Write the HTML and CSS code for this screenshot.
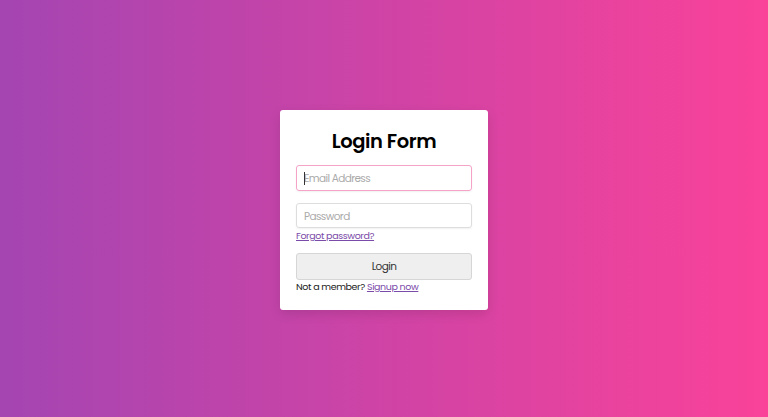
FILE: index.html
```html
<!DOCTYPE html>
<html>
<head>
<meta charset="utf-8">
<link rel="stylesheet" href="styles.css">
</head>
<body>
<div class="page">
  <form class="card">
    <h1 class="title">Login Form</h1>
    <div class="field focus"><span class="caret"></span><input class="input" type="text" placeholder="Email Address"></div>
    <div class="field pw"><input class="input" type="password" placeholder="Password"></div>
    <a class="link forgot" href="#">Forgot password?</a>
    <button class="btn" type="button">Login</button>
    <p class="signup">Not a member? <a class="link" href="#">Signup now</a></p>
  </form>
</div>
</body>
</html>
```
FILE: styles.css
```css
* { box-sizing: border-box; }
html, body { margin: 0; padding: 0; height: 100%; }
body {
  font-family: "Poppins", "Inter", "Noto Sans", sans-serif;
  background: linear-gradient(to right, #a445b2, #fa4299);
}
.page {
  height: 417px;
  padding-top: 110px;
  display: flex;
  align-items: flex-start;
  justify-content: center;
}
.card {
  width: 208px;
  height: 200px;
  background: #fff;
  border-radius: 3px;
  padding: 16px;
  display: flex;
  flex-direction: column;
  box-shadow: 0 4px 12px rgba(0,0,0,0.12);
}
.title {
  margin: 0 0 9px;
  height: 30px;
  line-height: 31px;
  font-size: 19.5px;
  font-weight: 600;
  letter-spacing: -0.4px;
  text-align: center;
  color: #000;
}
.field {
  position: relative;
  height: 26px;
  width: 100%;
  border: 1px solid #ddd;
  border-radius: 3px;
  box-shadow: 0 1px 2px rgba(0,0,0,0.06);
  display: flex;
  align-items: center;
}
.input {
  border: none;
  outline: none;
  background: transparent;
  width: 100%;
  height: 100%;
  padding: 3px 7px 0;
  font-family: inherit;
  font-size: 10.5px;
  letter-spacing: -0.6px;
  color: #333;
}
.input::placeholder { color: #aaa; }
.field.focus { border-color: #f5a3c7; }
.caret {
  position: absolute;
  left: 7px;
  top: 6px;
  width: 1px;
  height: 13px;
  background: #333;
}
.pw { margin-top: 12px; }
.link {
  color: #7b4ba9;
  font-size: 9.5px;
  letter-spacing: -0.4px;
  text-decoration: underline;
}
.forgot {
  line-height: 15px;
  height: 15px;
  margin-bottom: 10px;
}
.btn {
  height: 27px;
  width: 100%;
  background: #efefef;
  border: 1px solid #d6d6d6;
  border-radius: 3px;
  font-family: inherit;
  font-size: 10.5px;
  letter-spacing: -0.6px;
  color: #333;
  padding: 1px 0 0;
}
.signup {
  margin: 0;
  line-height: 14px;
  font-size: 9.5px;
  letter-spacing: -0.4px;
  color: #222;
}
```
